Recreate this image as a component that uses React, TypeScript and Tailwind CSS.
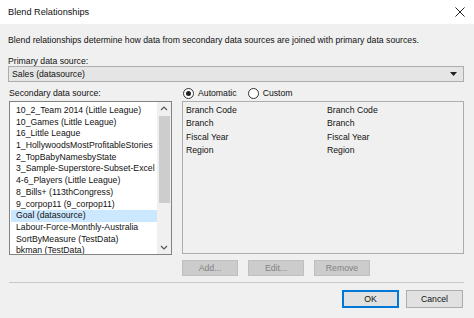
import React from 'react';

const sources = [
  '10_2_Team 2014 (Little League)',
  '10_Games (Little League)',
  '16_Little League',
  '1_HollywoodsMostProfitableStories',
  '2_TopBabyNamesbyState',
  '3_Sample-Superstore-Subset-Excel',
  '4-6_Players (Little League)',
  '8_Bills+ (113thCongress)',
  '9_corpop11 (9_corpop11)',
  'Goal (datasource)',
  'Labour-Force-Monthly-Australia',
  'SortByMeasure (TestData)',
  'bkman (TestData)',
];

const fields = ['Branch Code', 'Branch', 'Fiscal Year', 'Region'];

function Radio({ checked, label }: { checked?: boolean; label: string }) {
  return (
    <div className="flex items-center gap-[4px]">
      <span className="flex h-[11px] w-[11px] items-center justify-center rounded-full border border-[#333] bg-white">
        {checked && <span className="h-[5px] w-[5px] rounded-full bg-[#222]" />}
      </span>
      <span>{label}</span>
    </div>
  );
}

export default function App() {
  return (
    <div className="h-[318px] w-[474px] overflow-hidden bg-[#f0f0f0] text-[8.7px] leading-[12px] text-[#111] [font-family:'Liberation_Sans',Arial,sans-serif]">
      {/* title bar */}
      <div className="flex h-[24px] items-center justify-between bg-white pl-[8px] pr-[8px] text-[9.2px]">
        <span>Blend Relationships</span>
        <svg width="10" height="10" viewBox="0 0 10 10" className="mr-[1px]">
          <path d="M0.5 0.5 L9.5 9.5 M9.5 0.5 L0.5 9.5" stroke="#222" strokeWidth="1" />
        </svg>
      </div>

      <div className="pl-[8px] pr-[10px]">
        <p className="mt-[10px] h-[12px]">
          Blend relationships determine how data from secondary data sources are joined with primary data sources.
        </p>
        <p className="mt-[9px] h-[12px]">Primary data source:</p>

        {/* primary dropdown */}
        <div className="mt-[-1px] flex h-[16px] items-center justify-between border border-[#adadad] bg-[#e5e5e5] pl-[3px] pr-[6px]">
          <span>Sales (datasource)</span>
          <svg width="7" height="4" viewBox="0 0 7 4">
            <path d="M0 0 L7 0 L3.5 4 Z" fill="#222" />
          </svg>
        </div>

        {/* secondary + relationships */}
        <div className="mt-[5px] flex gap-[10px]">
          <div className="flex w-[164px] flex-col">
            <p className="h-[12px] pl-[1px]">Secondary data source:</p>
            <div className="mt-[2px] ml-[1px] flex h-[154px] border border-[#828282] bg-white">
              <div className="flex-1 overflow-hidden pt-[3px] pl-[1px]">
                {sources.map((s) => (
                  <div
                    key={s}
                    className={`h-[11.7px] whitespace-nowrap pl-[5px] leading-[11.7px] ${s === 'Goal (datasource)' ? 'bg-[#cce8ff]' : ''}`}
                  >
                    {s}
                  </div>
                ))}
              </div>
              <div className="flex w-[14px] flex-col items-center bg-[#f0f0f0]">
                <svg width="14" height="14" viewBox="0 0 14 14">
                  <path d="M4 8 L7 5 L10 8" stroke="#555" strokeWidth="1.2" fill="none" />
                </svg>
                <div className="h-[87px] w-[11px] bg-[#cdcdcd]" />
                <div className="flex-1" />
                <svg width="14" height="14" viewBox="0 0 14 14">
                  <path d="M4 6 L7 9 L10 6" stroke="#555" strokeWidth="1.2" fill="none" />
                </svg>
              </div>
            </div>
          </div>

          <div className="flex flex-1 flex-col">
            <div className="flex h-[12px] items-center gap-[11px] pl-[1px]">
              <Radio checked label="Automatic" />
              <Radio label="Custom" />
            </div>
            <div className="mt-[2px] h-[153px] border border-[#adadad] bg-[#f0f0f0] pt-[1px]">
              {fields.map((f) => (
                <div key={f} className="flex h-[13.5px] items-center">
                  <span className="w-[144px] pl-[3px]">{f}</span>
                  <span>{f}</span>
                </div>
              ))}
            </div>
            <div className="mt-[6px] flex gap-[10px]">
              {['Add...', 'Edit...', 'Remove'].map((b) => (
                <div
                  key={b}
                  className="flex h-[16px] w-[56px] items-center justify-center border border-[#bfbfbf] bg-[#cccccc] text-[#838383]"
                >
                  {b}
                </div>
              ))}
            </div>
          </div>
        </div>

        <div className="mt-[6px] ml-[1px] h-px bg-[#c8c8c8]" />

        <div className="mt-[7px] flex justify-end gap-[7px] pr-[1px]">
          <div className="flex h-[18px] w-[57px] items-center justify-center border border-[#0078d7] bg-[#e1e1e1] shadow-[inset_0_0_0_1px_#0078d7]">
            OK
          </div>
          <div className="flex h-[18px] w-[57px] items-center justify-center border border-[#adadad] bg-[#e1e1e1]">
            Cancel
          </div>
        </div>
      </div>
    </div>
  );
}
